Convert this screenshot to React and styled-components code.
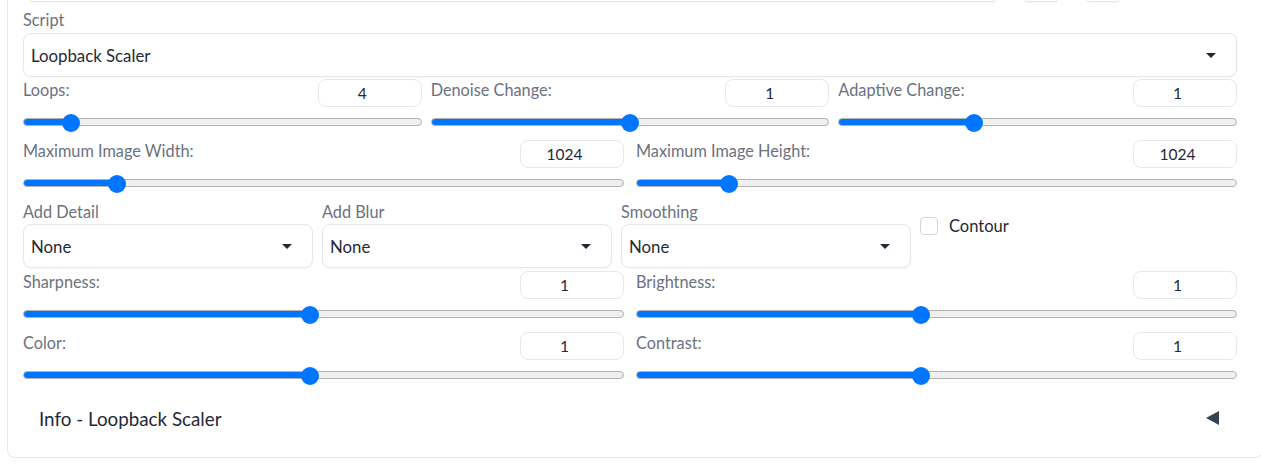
import styled, { createGlobalStyle } from "styled-components";

const Global = createGlobalStyle`
  html, body {
    margin: 0;
    background: #fff;
    overflow: hidden;
    font-family: Lato, "Noto Sans", sans-serif;
  }
  * { box-sizing: border-box; }
`;

const Panel = styled.div`
  width: 1256px;
  margin-left: 7px;
  padding: 0 25px 27px 15px;
  border: 1px solid #e5e7eb;
  border-top: none;
  border-radius: 0 0 8px 8px;
  display: flex;
  flex-direction: column;
`;

const TopStrip = styled.div`
  display: flex;
  height: 2px;
  padding-left: 7px;
  gap: 30px;
`;

const StripPiece = styled.div`
  width: ${(p) => p.w}px;
  height: 2px;
  border: 1px solid #e5e7eb;
  border-top: none;
  border-radius: 0 0 6px 6px;
  box-shadow: 0 1px 2px rgba(0, 0, 0, 0.05);
`;

const Label = styled.div`
  font-size: 16.3px;
  line-height: 20px;
  color: #6b7280;
  white-space: nowrap;
`;

const Field = styled.div`
  display: flex;
  flex-direction: column;
  gap: ${(p) => p.gap || 2}px;
  margin-top: ${(p) => p.mt || 0}px;
`;

const Select = styled.div`
  height: 44px;
  border: 1px solid #e5e7eb;
  border-radius: 8px;
  box-shadow: 0 1px 2px rgba(0, 0, 0, 0.04);
  display: flex;
  align-items: center;
  justify-content: space-between;
  padding: 0 20px 0 7px;
  font-size: 16.8px;
  color: #1f2937;
  background: #fff;
`;

const Caret = styled.span`
  width: 0;
  height: 0;
  border-left: 5px solid transparent;
  border-right: 5px solid transparent;
  border-top: 5px solid #1f2937;
`;

const Grid = styled.div`
  display: grid;
  grid-template-columns: ${(p) => p.template || `repeat(${p.cols}, 1fr)`};
  column-gap: ${(p) => p.gap || 10}px;
  margin-top: ${(p) => p.mt || 0}px;
`;

const SliderBlock = styled.div`
  display: flex;
  flex-direction: column;
  gap: 6px;
`;

const SliderHead = styled.div`
  display: flex;
  justify-content: space-between;
  align-items: flex-start;
  ${Label} { padding-top: 1px; }
`;

const NumberBox = styled.input`
  width: 104px;
  height: 28px;
  border: 1px solid #e5e7eb;
  border-radius: 8px;
  text-align: center;
  font-family: inherit;
  font-size: 15.5px;
  color: #1f2937;
  background: #fff;
  outline: none;
  padding: 0;
`;

const Range = styled.input`
  -webkit-appearance: none;
  appearance: none;
  width: 100%;
  height: 18px;
  margin: 0;
  background: transparent;
  display: block;

  &::-webkit-slider-runnable-track {
    height: 8px;
    border: 1px solid #b2b2b2;
    border-radius: 5px;
    background: linear-gradient(#0075ff, #0075ff) 0 0 /
        calc(9px + var(--fill) * (100% - 18px)) 100% no-repeat border-box,
      #efefef;
  }
  &::-webkit-slider-thumb {
    -webkit-appearance: none;
    width: 18px;
    height: 18px;
    border-radius: 50%;
    background: #0075ff;
    border: none;
    margin-top: -5px;
  }
`;

const Checkline = styled.label`
  align-self: start;
  display: flex;
  align-items: center;
  gap: 11px;
  padding-top: 15px;
  font-size: 16.5px;
  line-height: 18px;
  color: #1f2937;
`;

const Box = styled.span`
  width: 18px;
  height: 18px;
  border: 1px solid #d1d5db;
  border-radius: 4px;
  background: #fff;
`;

const Accordion = styled.div`
  display: flex;
  justify-content: space-between;
  align-items: center;
  height: 24px;
  margin-top: 22px;
  padding: 0 18px 0 16px;
  font-size: 18.8px;
  color: #1f2937;
`;

const Arrow = styled.span`
  width: 0;
  height: 0;
  border-top: 7px solid transparent;
  border-bottom: 7px solid transparent;
  border-right: 13px solid #374151;
`;

const Slider = ({ label, value, fill }) => (
  <SliderBlock>
    <SliderHead>
      <Label>{label}</Label>
      <NumberBox type="number" defaultValue={value} />
    </SliderHead>
    <Range
      type="range"
      min="0"
      max="1000"
      defaultValue={fill * 1000}
      style={{ "--fill": fill }}
    />
  </SliderBlock>
);

const Dropdown = ({ label, value }) => (
  <Field>
    <Label>{label}</Label>
    <Select>
      <span>{value}</span>
      <Caret />
    </Select>
  </Field>
);

export default function App() {
  return (
    <>
      <Global />
      <Panel>
        <TopStrip>
          <StripPiece w={965} />
          <StripPiece w={32} />
          <StripPiece w={32} />
        </TopStrip>
        <Field mt={8} gap={3}>
          <Label>Script</Label>
          <Select>
            <span>Loopback Scaler</span>
            <Caret />
          </Select>
        </Field>
        <Grid cols={3} gap={9} mt={2}>
          <Slider label="Loops:" value={4} fill={0.1} />
          <Slider label="Denoise Change:" value={1} fill={0.5} />
          <Slider label="Adaptive Change:" value={1} fill={0.333} />
        </Grid>
        <Grid cols={2} gap={12} mt={9}>
          <Slider label="Maximum Image Width:" value={1024} fill={0.144} />
          <Slider label="Maximum Image Height:" value={1024} fill={0.142} />
        </Grid>
        <Grid template="290px 290px 290px 1fr" gap={9} mt={10}>
          <Dropdown label="Add Detail" value="None" />
          <Dropdown label="Add Blur" value="None" />
          <Dropdown label="Smoothing" value="None" />
          <Checkline>
            <Box />
            Contour
          </Checkline>
        </Grid>
        <Grid cols={2} gap={12} mt={3}>
          <Slider label="Sharpness:" value={1} fill={0.476} />
          <Slider label="Brightness:" value={1} fill={0.473} />
        </Grid>
        <Grid cols={2} gap={12} mt={9}>
          <Slider label="Color:" value={1} fill={0.476} />
          <Slider label="Contrast:" value={1} fill={0.473} />
        </Grid>
        <Accordion>
          <span>Info - Loopback Scaler</span>
          <Arrow />
        </Accordion>
      </Panel>
    </>
  );
}
